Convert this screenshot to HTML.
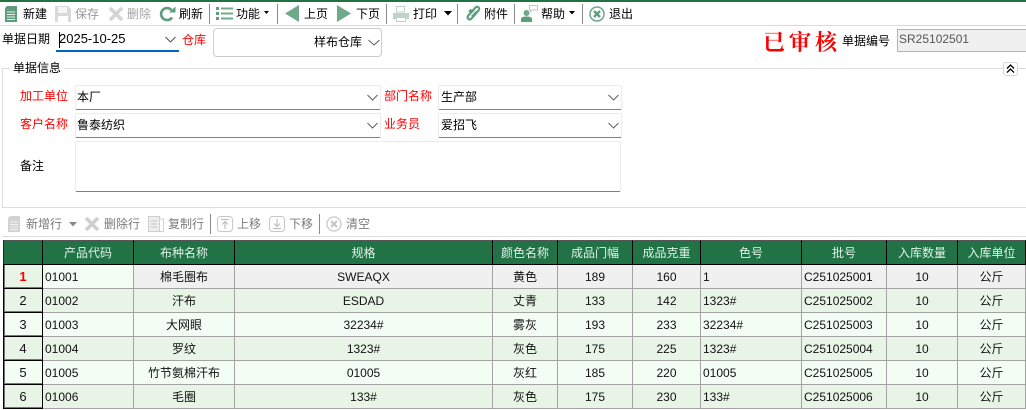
<!DOCTYPE html>
<html lang="zh-CN"><head><meta charset="utf-8"><title>单据</title>
<style>
html,body{margin:0;padding:0;width:1026px;height:410px;overflow:hidden;background:#fff}
body{position:relative;font:12px/16px "Liberation Sans","Noto Sans CJK SC",sans-serif;color:#000}
.a,.t,svg.i,.sep{position:absolute}
.t{white-space:nowrap;line-height:16px}
.g{color:#7b7b7b}
.r{color:#f00}
.sep{width:1px;background:#8a8a8a}
.inp{position:absolute;box-sizing:border-box;background:#fff;border:1px solid #ececec;border-bottom:1px solid #808080;border-radius:2px}
table{position:absolute;left:3px;top:240px;border-collapse:separate;border-spacing:0;table-layout:fixed;width:1023px;background:#fff}
th,td{box-sizing:border-box;height:24px;padding:0;overflow:hidden;white-space:nowrap;text-align:center;font-weight:normal;font-size:12px;line-height:16px}
th{background:#217346;color:#dff3e6;border-right:1px solid #000;border-top:1px solid #555;border-bottom:1px solid #000;height:25px}
th:first-child{border-left:1px solid #222}
td{border-right:1px solid #a3a3a3;border-bottom:1px solid #a3a3a3;color:#111}
td:first-child{background:#e8f5e6;border-left:1px solid #000;border-right:1px solid #000;border-bottom:1px solid #000;box-shadow:inset 1px 0 0 #777,inset 0 -1px 0 #777;font-size:13px}
td.l{text-align:left;padding-left:2px}
tr.o td{background:#f4fdf3}
tr.e td{background:#e8f5e6}
tr.s td{background:#f0f0f0}
tr.s td.w{background:#f4fdf3}
tr.s td:first-child{background:#e8f5e6;color:#f00;font-weight:bold}
</style></head><body>

<div class="a" style="left:0;top:0;width:1026px;height:2px;background:#217346"></div>
<div class="a" style="left:0;top:25px;width:1026px;height:1px;background:#d9d9d9"></div>

<!-- Toolbar 1 icons -->
<svg class="i" style="left:5px;top:6px" width="12" height="16" viewBox="0 0 12 16"><path d="M0 2 L2 0 H12 V16 H0Z" fill="#5f9e7c"/><path d="M2 6h8M2 8.500h8M2 11h8M2 13.500h8" stroke="#e6f2ea" stroke-width="1"/></svg>
<svg class="i" style="left:55px;top:6px" width="16" height="16" viewBox="0 0 16 16"><path d="M0 0H13L16 3V16H0Z" fill="#d9d9d9"/><rect x="3" y="1" width="9" height="6" fill="#f6f6f6"/><rect x="3" y="10" width="10" height="6" fill="#fff"/></svg>
<svg class="i" style="left:108px;top:6px" width="16" height="16" viewBox="0 0 16 16"><path d="M2 2L14 14M14 2L2 14" stroke="#d4d4d4" stroke-width="3.600"/></svg>
<svg class="i" style="left:159px;top:6px" width="17" height="16" viewBox="0 0 17 16"><path d="M13 11.500A6 6 0 1 1 12.500 4" fill="none" stroke="#5f9e7c" stroke-width="2.600"/><path d="M10 6.500H16.500V0.500Z" fill="#5f9e7c"/></svg>
<svg class="i" style="left:216px;top:7px" width="17" height="13" viewBox="0 0 17 13"><path d="M0 1.500h3M0 6.500h3M0 11.500h3" stroke="#5f9e7c" stroke-width="3"/><path d="M5 1.500h12M5 6.500h12M5 11.500h12" stroke="#6fa98a" stroke-width="2"/></svg>
<svg class="i" style="left:264px;top:11px" width="5" height="4"><path d="M0 0H5L2.500 3Z" fill="#000"/></svg>
<svg class="i" style="left:285px;top:5px" width="14" height="17"><path d="M14 0V17L0 8.500Z" fill="#6fa98a"/></svg>
<svg class="i" style="left:337px;top:5px" width="14" height="17"><path d="M0 0V17L14 8.500Z" fill="#6fa98a"/></svg>
<svg class="i" style="left:393px;top:6px" width="16" height="16" viewBox="0 0 16 16"><path d="M3.500 .5H11.500V6H3.500Z" fill="#fff" stroke="#bcd5c6"/><path d="M0 7H16V13H13V11H3V13H0Z" fill="#bcd5c6"/><path d="M3.500 11.500H12.500V15.500H3.500Z" fill="#fff" stroke="#bcd5c6"/></svg>
<svg class="i" style="left:444px;top:11px" width="8" height="5"><path d="M0 0H8L4 4.500Z" fill="#000"/></svg>
<svg class="i" style="left:466px;top:5px" width="15" height="17" viewBox="0 0 15 17"><path d="M5.500 7L9.500 2.500C11.500 .5 14.500 3 12.500 5.500L5.500 13.500C3.500 15.800 .3 13.500 2.300 10.500L8 4.500M6 11.500L11 6.500M3 7L5.500 4.500" fill="none" stroke="#5f9e7c" stroke-width="2.200"/></svg>
<svg class="i" style="left:521px;top:5px" width="17" height="17" viewBox="0 0 17 17"><circle cx="5.500" cy="8" r="3" fill="#6fa98a"/><path d="M0 17V14C0 12 3 11.500 5.500 11.500S11 12 11 14V17Z" fill="#5f9e7c"/><path d="M8.500 .5H16.500V5H11L9.500 6.500V5H8.500Z" fill="#fff" stroke="#b5cfc0"/></svg>
<svg class="i" style="left:569px;top:11px" width="6" height="4"><path d="M0 0H6L3 3.500Z" fill="#000"/></svg>
<svg class="i" style="left:589px;top:6px" width="16" height="16" viewBox="0 0 16 16"><circle cx="8" cy="8" r="7" fill="#fff" stroke="#6fa588" stroke-width="1.500"/><path d="M5 5L11 11M11 5L5 11" stroke="#5f9e7c" stroke-width="2.400"/></svg>

<div class="t" style="left:23px;top:6px">新建</div>
<div class="t" style="left:75px;top:6px;color:#999">保存</div>
<div class="t" style="left:127px;top:6px;color:#a5a5a5">删除</div>
<div class="t" style="left:179px;top:6px">刷新</div>
<div class="sep" style="left:209px;top:4px;height:20px"></div>
<div class="t" style="left:236px;top:6px">功能</div>
<div class="sep" style="left:277px;top:4px;height:20px"></div>
<div class="t" style="left:304px;top:6px">上页</div>
<div class="t" style="left:356px;top:6px">下页</div>
<div class="sep" style="left:386px;top:4px;height:20px"></div>
<div class="t" style="left:413px;top:6px">打印</div>
<div class="sep" style="left:457px;top:4px;height:20px"></div>
<div class="t" style="left:484px;top:6px">附件</div>
<div class="sep" style="left:514px;top:4px;height:20px"></div>
<div class="t" style="left:541px;top:6px">帮助</div>
<div class="sep" style="left:582px;top:4px;height:20px"></div>
<div class="t" style="left:609px;top:6px">退出</div>

<!-- Row 2 -->
<div class="t" style="left:2px;top:31px">单据日期</div>
<div class="a" style="left:56px;top:50px;width:123px;height:2px;background:#0067c0"></div>
<div class="a" style="left:59px;top:32px;width:1px;height:16px;background:#000"></div>
<div class="t" style="left:59px;top:31px;font-size:13px">2025-10-25</div>
<svg class="i" style="left:165px;top:36px" width="11" height="7"><path d="M.5 1L5.500 6L10.500 1" fill="none" stroke="#555" stroke-width="1.100"/></svg>
<div class="t r" style="left:182px;top:32px">仓库</div>
<div class="a" style="left:213px;top:28px;width:169px;height:29px;box-sizing:border-box;border:1px solid #ccc;border-radius:4px"></div>
<div class="t" style="left:314px;top:34px">样布仓库</div>
<svg class="i" style="left:368px;top:39px" width="12" height="7"><path d="M.5 1L6 6L11.500 1" fill="none" stroke="#666" stroke-width="1.100"/></svg>

<div class="t r" style="left:763px;top:27px;font:bold 22px/30px 'Noto Serif CJK SC',serif;letter-spacing:4px">已审核</div>
<div class="t" style="left:842px;top:33px">单据编号</div>
<div class="a" style="left:897px;top:29px;width:140px;height:23px;box-sizing:border-box;background:#f0f0f0;border:1px solid #b5b5b5"></div>
<div class="t" style="left:899px;top:31px;color:#555">SR25102501</div>

<!-- Group box -->
<div class="a" style="left:2px;top:68px;width:1030px;height:140px;box-sizing:border-box;border:1px solid #dcdcdc"></div>
<div class="t" style="left:10px;top:60px;background:#fff;padding:0 3px">单据信息</div>
<div class="a" style="left:1003px;top:62px;width:15px;height:14px;box-sizing:border-box;background:#fff;border:1px solid #d5d5d5;border-radius:3px"></div>
<svg class="i" style="left:1006px;top:64px" width="9" height="10"><path d="M1 4.500L4.500 1L8 4.500M1 8.500L4.500 5L8 8.500" fill="none" stroke="#000" stroke-width="1.300"/></svg>

<div class="t r" style="left:20px;top:88px">加工单位</div>
<div class="inp" style="left:75px;top:85px;width:306px;height:25px"></div>
<div class="t" style="left:77px;top:89px">本厂</div>
<svg class="i" style="left:367px;top:94px" width="11" height="7"><path d="M.5 1L5.500 6L10.500 1" fill="none" stroke="#666" stroke-width="1.100"/></svg>
<div class="t r" style="left:384px;top:88px">部门名称</div>
<div class="inp" style="left:438px;top:85px;width:184px;height:25px"></div>
<div class="t" style="left:441px;top:89px">生产部</div>
<svg class="i" style="left:608px;top:94px" width="11" height="7"><path d="M.5 1L5.500 6L10.500 1" fill="none" stroke="#666" stroke-width="1.100"/></svg>

<div class="t r" style="left:20px;top:116px">客户名称</div>
<div class="inp" style="left:75px;top:113px;width:306px;height:25px"></div>
<div class="t" style="left:77px;top:117px">鲁泰纺织</div>
<svg class="i" style="left:367px;top:122px" width="11" height="7"><path d="M.5 1L5.500 6L10.500 1" fill="none" stroke="#666" stroke-width="1.100"/></svg>
<div class="t r" style="left:384px;top:116px">业务员</div>
<div class="inp" style="left:438px;top:113px;width:184px;height:25px"></div>
<div class="t" style="left:441px;top:117px">爱招飞</div>
<svg class="i" style="left:608px;top:122px" width="11" height="7"><path d="M.5 1L5.500 6L10.500 1" fill="none" stroke="#666" stroke-width="1.100"/></svg>

<div class="t" style="left:20px;top:158px">备注</div>
<div class="inp" style="left:75px;top:141px;width:546px;height:51px"></div>

<!-- Toolbar 2 -->
<svg class="i" style="left:8px;top:216px" width="12" height="16" viewBox="0 0 12 16"><path d="M0 2L2 0H12V16H0Z" fill="#d2d2d2"/><path d="M2 6h8M2 8.500h8M2 11h8M2 13.500h8" stroke="#f2f2f2"/></svg>
<div class="t g" style="left:26px;top:216px">新增行</div>
<svg class="i" style="left:69px;top:222px" width="8" height="5"><path d="M0 0H8L4 4.500Z" fill="#888"/></svg>
<svg class="i" style="left:84px;top:216px" width="16" height="16"><path d="M2 2L14 14M14 2L2 14" stroke="#cfcfcf" stroke-width="3.600"/></svg>
<div class="t g" style="left:104px;top:216px">删除行</div>
<svg class="i" style="left:148px;top:216px" width="16" height="16"><path d="M.5 .5H11.500V15.500H.5Z" fill="#eee" stroke="#cfcfcf"/><path d="M12 3H15.500V15.500H12" fill="none" stroke="#cfcfcf"/><path d="M3 5h6M3 8h6M3 11h6" stroke="#c4c4c4"/></svg>
<div class="t g" style="left:168px;top:216px">复制行</div>
<div class="sep" style="left:210px;top:214px;height:20px"></div>
<svg class="i" style="left:217px;top:216px" width="16" height="16"><rect x=".5" y=".5" width="15" height="15" rx="3" fill="#fff" stroke="#c8c8c8"/><path d="M4 3.500H12M8 13V5.500M5 8.500L8 5.500L11 8.500" fill="none" stroke="#c0c0c0" stroke-width="1.200"/></svg>
<div class="t g" style="left:237px;top:216px">上移</div>
<svg class="i" style="left:269px;top:216px" width="16" height="16"><rect x=".5" y=".5" width="15" height="15" rx="3" fill="#fff" stroke="#c8c8c8"/><path d="M4 12.500H12M8 3V10.500M5 7.500L8 10.500L11 7.500" fill="none" stroke="#c0c0c0" stroke-width="1.200"/></svg>
<div class="t g" style="left:289px;top:216px">下移</div>
<div class="sep" style="left:319px;top:214px;height:20px"></div>
<svg class="i" style="left:326px;top:216px" width="16" height="16"><circle cx="8" cy="8" r="7" fill="#fff" stroke="#c8c8c8" stroke-width="1.300"/><path d="M5 5L11 11M11 5L5 11" stroke="#c4c4c4" stroke-width="2"/></svg>
<div class="t g" style="left:346px;top:216px">清空</div>
<div class="a" style="left:2px;top:236px;width:1024px;height:1px;background:#dcdcdc"></div>

<table>
<colgroup><col style="width:40px"><col style="width:91px"><col style="width:101px"><col style="width:258px"><col style="width:65px"><col style="width:75px"><col style="width:68px"><col style="width:101px"><col style="width:85px"><col style="width:71px"><col style="width:68px"></colgroup>
<tr><th></th><th>产品代码</th><th>布种名称</th><th>规格</th><th>颜色名称</th><th>成品门幅</th><th>成品克重</th><th>色号</th><th>批号</th><th>入库数量</th><th>入库单位</th></tr>
<tr class="s"><td>1</td><td class="l w">01001</td><td>棉毛圈布</td><td>SWEAQX</td><td>黄色</td><td>189</td><td>160</td><td class="l">1</td><td class="l">C251025001</td><td>10</td><td>公斤</td></tr>
<tr class="e"><td>2</td><td class="l">01002</td><td>汗布</td><td>ESDAD</td><td>丈青</td><td>133</td><td>142</td><td class="l">1323#</td><td class="l">C251025002</td><td>10</td><td>公斤</td></tr>
<tr class="o"><td>3</td><td class="l">01003</td><td>大网眼</td><td>32234#</td><td>雾灰</td><td>193</td><td>233</td><td class="l">32234#</td><td class="l">C251025003</td><td>10</td><td>公斤</td></tr>
<tr class="e"><td>4</td><td class="l">01004</td><td>罗纹</td><td>1323#</td><td>灰色</td><td>175</td><td>225</td><td class="l">1323#</td><td class="l">C251025004</td><td>10</td><td>公斤</td></tr>
<tr class="o"><td>5</td><td class="l">01005</td><td>竹节氨棉汗布</td><td>01005</td><td>灰红</td><td>185</td><td>220</td><td class="l">01005</td><td class="l">C251025005</td><td>10</td><td>公斤</td></tr>
<tr class="e"><td>6</td><td class="l">01006</td><td>毛圈</td><td>133#</td><td>灰色</td><td>175</td><td>230</td><td class="l">133#</td><td class="l">C251025006</td><td>10</td><td>公斤</td></tr>
</table>
</body></html>
